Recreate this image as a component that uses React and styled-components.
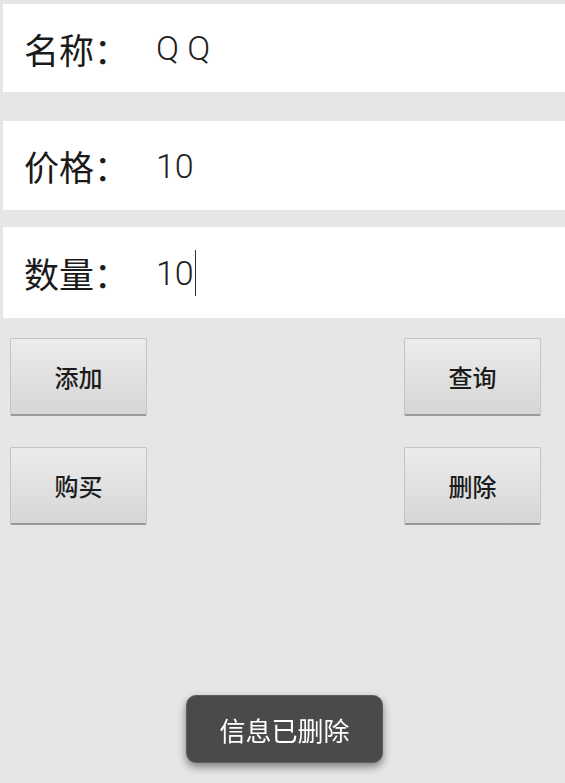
import React from "react";
import styled, { createGlobalStyle } from "styled-components";

const GlobalStyle = createGlobalStyle`
  html, body {
    margin: 0;
    padding: 0;
    background-color: #e6e6e6;
  }
  body {
    font-family: Roboto, "Noto Sans CJK SC", sans-serif;
  }
`;

const Page = styled.div`
  width: 565px;
  height: 783px;
  padding-top: 4px;
  box-sizing: border-box;
  background-color: #e6e6e6;
  overflow: hidden;
`;

const Field = styled.div`
  margin-top: ${(props) => props.$top || 0}px;
  margin-left: 3px;
  height: ${(props) => props.$height || 88}px;
  background-color: #ffffff;
  display: flex;
  align-items: center;
  padding-left: 21px;
  box-sizing: border-box;
`;

const Label = styled.span`
  width: 132px;
  font-family: "Noto Sans CJK SC", sans-serif;
  font-size: 35px;
  color: #1a1a1a;
`;

const Value = styled.span`
  font-family: Roboto, "Noto Sans CJK SC", sans-serif;
  font-size: 34px;
  font-weight: 300;
  color: #1e1e1e;
  display: flex;
  align-items: center;
`;

const Cursor = styled.span`
  display: inline-block;
  width: 1.5px;
  height: 46px;
  background-color: #333;
  margin-left: 1px;
`;

const ButtonRow = styled.div`
  display: flex;
  justify-content: space-between;
  padding: 0 24px 0 10px;
  margin-top: ${(props) => props.$top}px;
`;

const Button = styled.button`
  width: 137px;
  height: 78px;
  box-sizing: border-box;
  background: linear-gradient(#ececec, #d6d6d6);
  border: 1px solid #c4c4c4;
  border-bottom: 2px solid #999999;
  border-radius: 2px;
  font-family: "Noto Sans CJK SC", sans-serif;
  font-size: 24px;
  font-weight: 500;
  color: #1c1c1c;
  padding: 0;
  cursor: pointer;
`;

const Toast = styled.div`
  position: fixed;
  left: 186px;
  top: 695px;
  width: 197px;
  height: 68px;
  box-sizing: border-box;
  background-color: #4a4a4a;
  border: 1px solid #5e5e5e;
  border-radius: 10px;
  box-shadow: 0 4px 8px rgba(0, 0, 0, 0.45);
  display: flex;
  align-items: center;
  justify-content: center;
  font-family: "Noto Sans CJK SC", sans-serif;
  font-size: 26px;
  color: #ffffff;
`;

export default function App() {
  return (
    <Page>
      <GlobalStyle />
      <Field $height={88}>
        <Label>名称：</Label>
        <Value>Q Q</Value>
      </Field>
      <Field $top={29} $height={89}>
        <Label>价格：</Label>
        <Value>10</Value>
      </Field>
      <Field $top={17} $height={91}>
        <Label>数量：</Label>
        <Value>
          10
          <Cursor />
        </Value>
      </Field>
      <ButtonRow $top={20}>
        <Button>添加</Button>
        <Button>查询</Button>
      </ButtonRow>
      <ButtonRow $top={31}>
        <Button>购买</Button>
        <Button>删除</Button>
      </ButtonRow>
      <Toast>信息已删除</Toast>
    </Page>
  );
}
